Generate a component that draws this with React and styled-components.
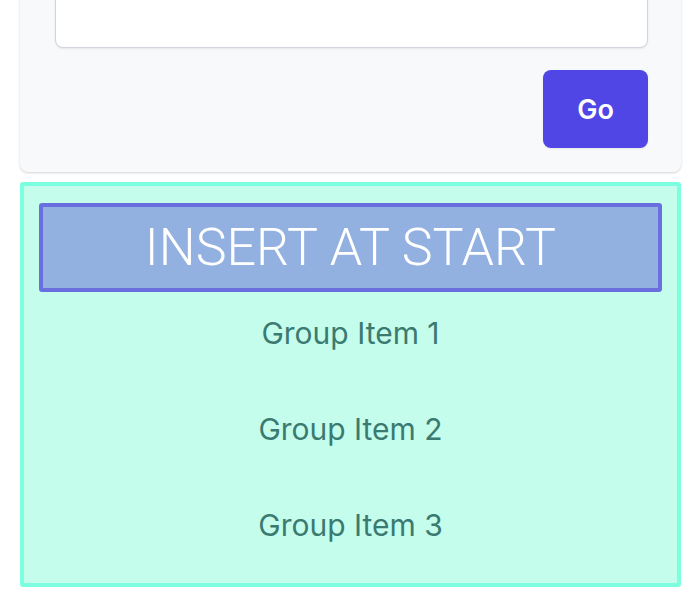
import React from 'react'
import styled, { createGlobalStyle } from 'styled-components'

const GlobalStyle = createGlobalStyle`
  html, body {
    margin: 0;
    padding: 0;
    background: #fff;
    overflow: hidden;
  }
  body {
    font-family: Inter, "Noto Sans", sans-serif;
  }
`

const Page = styled.div`
  padding: 0 19px 0 20px;
  margin-top: -120px;
`

const Card = styled.div`
  background: #f8f9fb;
  border-radius: 8px;
  box-shadow: 0 1px 3px rgba(0, 0, 0, 0.12), 0 1px 2px rgba(0, 0, 0, 0.06);
  padding: 28px 33px 24px 35px;
  display: flex;
  flex-direction: column;
`

const TextArea = styled.textarea`
  box-sizing: border-box;
  height: 140px;
  width: 100%;
  resize: none;
  background: #fff;
  border: 1px solid #d1d5db;
  border-radius: 8px;
  box-shadow: 0 1px 2px rgba(0, 0, 0, 0.08);
  outline: none;
`

const Actions = styled.div`
  display: flex;
  justify-content: flex-end;
  margin-top: 22px;
`

const GoButton = styled.button`
  width: 105px;
  height: 78px;
  border: none;
  border-radius: 8px;
  background: #4f46e5;
  color: #fff;
  font-family: Inter, sans-serif;
  font-size: 27px;
  font-weight: 600;
  box-shadow: 0 1px 2px rgba(0, 0, 0, 0.08);
`

const Group = styled.div`
  margin-top: 10px;
  border: 4px solid #7cffdf;
  border-radius: 3px;
  background: #c4fdec;
  padding: 17px 15px 17px 15px;
  display: flex;
  flex-direction: column;
`

const InsertButton = styled.button`
  height: 89px;
  border: 4px solid #6a6fe0;
  border-radius: 3px;
  background: #93b1e0;
  color: #fff;
  font-family: Roboto, sans-serif;
  font-weight: 300;
  font-size: 52px;
  display: flex;
  align-items: center;
  justify-content: center;
`

const Item = styled.div`
  height: 82px;
  display: flex;
  align-items: center;
  justify-content: center;
  color: #3b7a70;
  font-family: Inter, sans-serif;
  font-size: 30px;
  & + & {
    margin-top: 14px;
  }
`

const items = ['Group Item 1', 'Group Item 2', 'Group Item 3']

const App = () => {
  return (
    <>
      <GlobalStyle />
      <Page>
        <Card>
          <TextArea />
          <Actions>
            <GoButton>Go</GoButton>
          </Actions>
        </Card>
        <Group>
          <InsertButton>INSERT AT START</InsertButton>
          {items.map(item => (
            <Item key={item}>{item}</Item>
          ))}
        </Group>
      </Page>
    </>
  )
}

export default App
